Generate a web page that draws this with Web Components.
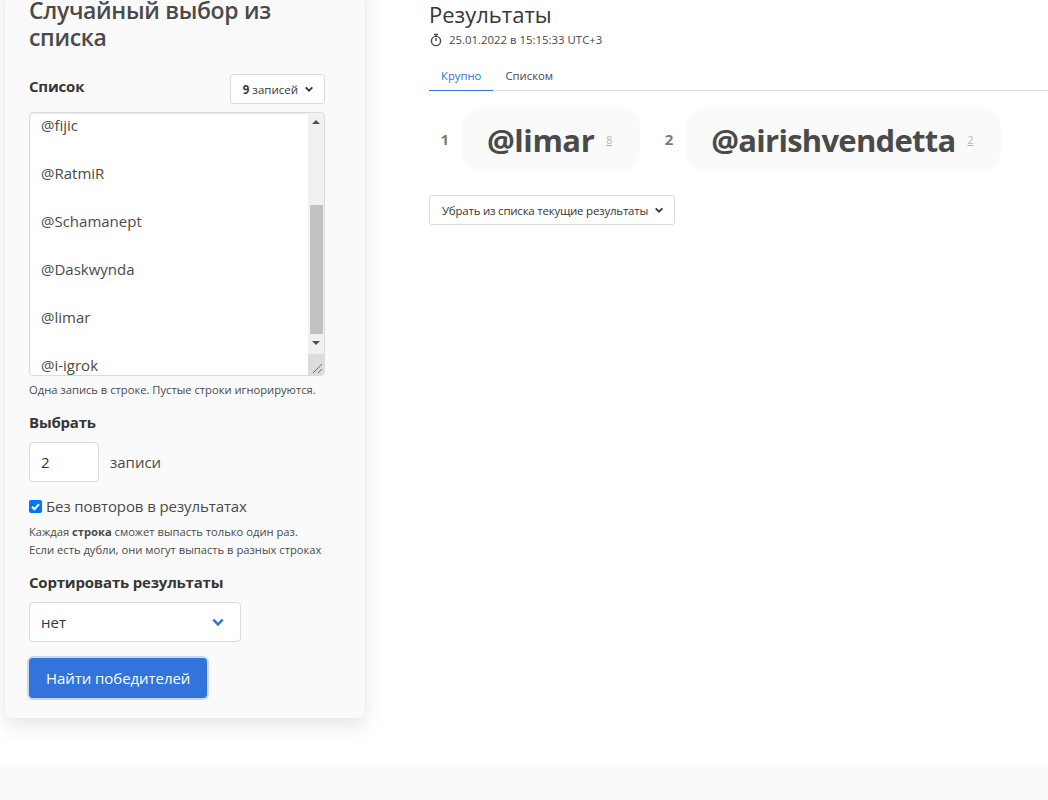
<!DOCTYPE html>
<html lang="ru">
<head>
<meta charset="utf-8">
<title>Случайный выбор из списка</title>
<style>
  html, body { margin: 0; height: 800px; overflow: hidden; background: #fff; }
  body { font-family: "Open Sans", "Noto Sans", sans-serif; color: #4a4a4a; }
</style>
</head>
<body>
<app-page>
  <pick-panel slot="side"></pick-panel>
  <results-pane slot="main"></results-pane>
</app-page>

<script>
// shared look of the little chevrons
const chevron = (color, w) => `<svg width="${w}" height="${w}" viewBox="0 0 12 12" fill="none" stroke="${color}" stroke-width="2.2"><path d="M2 4l4 4 4-4"/></svg>`;

class AppPage extends HTMLElement {
  constructor() {
    super();
    this.attachShadow({ mode: "open" }).innerHTML = `
<style>
  :host { display: flex; flex-direction: column; height: 800px; overflow: hidden; }
  .cols { display: flex; height: 766px; flex: none; align-items: flex-start; }
  .side { flex: none; width: 360px; margin-left: 5px; margin-top: -18px; }
  .main { flex: 1; min-width: 0; margin-left: 64px; margin-top: -1px; }
  footer { flex: 1; background: #fafafa; }
</style>
<div class="cols">
  <div class="side"><slot name="side"></slot></div>
  <div class="main"><slot name="main"></slot></div>
</div>
<footer></footer>`;
  }
}
customElements.define("app-page", AppPage);

class ListBox extends HTMLElement {
  constructor() {
    super();
    const rows = ["@fijic", "@RatmiR", "@Schamanept", "@Daskwynda", "@limar", "@i-igrok"];
    this.attachShadow({ mode: "open" }).innerHTML = `
<style>
  :host { display: flex; position: relative; height: 262px; background: #fff; border: 1px solid #dbdbdb; border-radius: 4px; overflow: hidden; box-shadow: inset 0 1px 2px rgba(10,10,10,.1); }
  .text { flex: 1; overflow: hidden; padding: 0 11px; margin-top: -12px; font-size: 15px; line-height: 48px; color: #4a4a4a; white-space: nowrap; }
  .bar { flex: none; width: 16px; background: #f1f1f1; display: flex; flex-direction: column; align-items: center; }
  .end { flex: none; height: 17px; display: flex; align-items: center; justify-content: center; }
  .gap { flex: none; height: 75px; }
  .thumb { flex: none; width: 13px; height: 129px; background: #c1c1c1; }
  .up { width: 0; height: 0; border: 4px solid transparent; border-top: 0; border-bottom: 4px solid #505050; }
  .down { width: 0; height: 0; border: 4px solid transparent; border-bottom: 0; border-top: 4px solid #505050; }
  .corner { position: absolute; right: 0; bottom: 0; width: 16px; height: 21px; background: #dcdcdc; }
  .corner svg { position: absolute; right: 1px; bottom: 1px; }
</style>
<div class="text">${rows.map(r => `<div>${r}</div>`).join("")}</div>
<div class="bar">
  <div class="end"><i class="up"></i></div>
  <div class="gap"></div>
  <div class="thumb"></div>
  <div class="end"><i class="down"></i></div>
</div>
<div class="corner"><svg width="11" height="11" viewBox="0 0 11 11" fill="none" stroke="#6b6b6b"><path d="M1 10L10 1M6 10l4-4"/></svg></div>`;
  }
}
customElements.define("list-box", ListBox);

class DropButton extends HTMLElement {
  constructor() {
    super();
    this.attachShadow({ mode: "open" }).innerHTML = `
<style>
  :host { display: inline-flex; align-items: center; height: 28px; padding: 0 10px 0 12px; gap: 6px; background: #fff; border: 1px solid #dbdbdb; border-radius: 3px; font-size: 11.5px; color: #363636; white-space: nowrap; }
  svg { display: block; }
</style>
<span><slot></slot></span>${chevron("#363636", 10)}`;
  }
}
customElements.define("drop-button", DropButton);

class PickPanel extends HTMLElement {
  constructor() {
    super();
    this.attachShadow({ mode: "open" }).innerHTML = `
<style>
  :host { display: block; background: #fafafa; border-radius: 0 0 6px 6px; padding: 15px 40px 20px 24px; box-shadow: 0 8px 20px rgba(10,10,10,.1), 0 0 2px rgba(10,10,10,.05); color: #4a4a4a; }
  h1 { margin: 0; font-size: 23px; line-height: 27px; font-weight: 600; letter-spacing: -.33px; color: #4a4a4a; }
  .head { display: flex; justify-content: space-between; align-items: flex-start; margin-top: 23px; }
  .lab { font-size: 15px; line-height: 22px; font-weight: 700; letter-spacing: -.2px; color: #363636; }
  .head .lab { margin-top: 1px; }
  b { font-weight: 700; }
  list-box { margin-top: 8px; }
  .help { font-size: 11.2px; line-height: 18px; color: #4a4a4a; }
  .pick { display: flex; align-items: center; gap: 11px; margin-top: 9px; font-size: 15px; }
  .box { box-sizing: border-box; background: #fff; border: 1px solid #dbdbdb; border-radius: 4px; height: 40px; display: flex; align-items: center; padding: 0 11px; font-size: 15px; color: #363636; }
  .num { width: 70px; }
  .check { display: flex; align-items: center; gap: 4px; margin-top: 13px; font-size: 15px; line-height: 22px; letter-spacing: -.1px; }
  .check svg { flex: none; }
  .sel { width: 212px; justify-content: space-between; padding-right: 15px; margin-top: 9px; }
  .go { display: inline-block; box-sizing: border-box; height: 40px; line-height: 40px; padding: 0 17px; margin-top: 16px; background: #3273dc; color: #fff; font-size: 15px; letter-spacing: -.06px; border-radius: 4px; box-shadow: 0 0 0 2px rgba(50,115,220,.25); }
</style>
<h1>Случайный выбор из списка</h1>
<div class="head">
  <div class="lab">Список</div>
  <drop-button><b>9</b> записей</drop-button>
</div>
<list-box></list-box>
<div class="help" style="margin-top:5px">Одна запись в строке. Пустые строки игнорируются.</div>
<div class="lab" style="margin-top:12px">Выбрать</div>
<div class="pick"><div class="box num">2</div><span>записи</span></div>
<label class="check">
  <svg width="13" height="13" viewBox="0 0 13 13"><rect width="13" height="13" rx="2" fill="#0075ff"/><path d="M3 6.8l2.4 2.4L10 4.2" fill="none" stroke="#fff" stroke-width="2"/></svg>
  <span>Без повторов в результатах</span>
</label>
<div class="help" style="margin-top:6px">Каждая <b>строка</b> сможет выпасть только один раз.<br>Если есть дубли, они могут выпасть в разных строках</div>
<div class="lab" style="margin-top:12px">Сортировать результаты</div>
<div class="box sel"><span>нет</span>${chevron("#3273dc", 14)}</div>
<div class="go">Найти победителей</div>`;
  }
}
customElements.define("pick-panel", PickPanel);

class ResultChip extends HTMLElement {
  constructor() {
    super();
    this.attachShadow({ mode: "open" }).innerHTML = `
<style>
  :host { display: flex; align-items: center; gap: 13px; }
  .n { font-size: 15px; font-weight: 700; color: #7a7a7a; width: 20px; text-align: right; }
  .chip { display: flex; align-items: baseline; gap: 12px; height: 64px; line-height: 66px; padding: 0 28px 0 25px; background: #fafafa; border-radius: 20px; }
  .name { font-size: 31px; font-weight: 700; letter-spacing: var(--tight, -.6px); color: #4a4a4a; }
  .cnt { font-size: 10.5px; color: #b5b5b5; text-decoration: underline; position: relative; top: -8px; }
</style>
<span class="n">${this.getAttribute("place")}</span>
<div class="chip"><span class="name"><slot></slot></span><span class="cnt">${this.getAttribute("count")}</span></div>`;
  }
}
customElements.define("result-chip", ResultChip);

class ResultsPane extends HTMLElement {
  constructor() {
    super();
    this.attachShadow({ mode: "open" }).innerHTML = `
<style>
  :host { display: block; color: #4a4a4a; }
  h2 { margin: 0; padding-top: 0; font-size: 22px; line-height: 30px; font-weight: 500; color: #363636; }
  .when { display: flex; align-items: center; gap: 6px; font-size: 11.4px; line-height: 20px; margin-top: 1px; }
  .tabs { display: flex; margin-top: 12px; border-bottom: 1px solid #dbdbdb; font-size: 11.3px; line-height: 28px; }
  .tab { padding: 0 12px; margin-bottom: -1px; }
  .tab.on { color: #3273dc; border-bottom: 1px solid #3273dc; }
  .chips { display: flex; gap: 13px; margin-top: 16px; }
  .clear { margin-top: 24px; height: 28px; }
  drop-button { height: 28px; letter-spacing: -.23px; }
</style>
<h2>Результаты</h2>
<div class="when">
  <svg width="14" height="14" viewBox="0 0 14 14" fill="none" stroke="#4a4a4a" stroke-width="1.4"><circle cx="7" cy="8" r="4.6"/><path d="M5 1.5h4M7 1.5v2M7 8V5"/></svg>
  <span>25.01.2022 в 15:15:33 UTC+3</span>
</div>
<div class="tabs"><div class="tab on">Крупно</div><div class="tab">Списком</div></div>
<div class="chips">
  <result-chip place="1" count="8" style="--tight:-.45px">@limar</result-chip>
  <result-chip place="2" count="2" style="--tight:-.74px">@airishvendetta</result-chip>
</div>
<div class="clear"><drop-button>Убрать из списка текущие результаты</drop-button></div>`;
  }
}
customElements.define("results-pane", ResultsPane);
</script>
</body>
</html>
